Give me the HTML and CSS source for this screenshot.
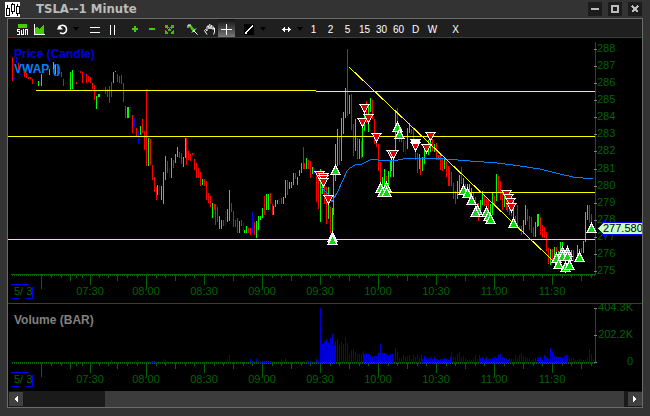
FILE: index.html
```html
<!DOCTYPE html>
<html lang="en">
<head>
  <meta charset="UTF-8">
  <meta name="viewport" content="width=device-width, initial-scale=1.0">
  <title>TSLA--1 Minute</title>
  <link rel="stylesheet" href="styles.css">
</head>
<body>
  <!-- Title bar -->
  <header class="titlebar">
    <svg class="logo" width="15" height="15" viewBox="0 0 15 15" shape-rendering="crispEdges">
      <rect width="15" height="15" fill="#fff"/>
      <path d="M2.5 3V14M7.5 1V12M12.5 2V14" stroke="#000"/>
      <path d="M1.5 6.500H4.500V13.500H1.500ZM6.500 2.500H9.500V9.500H6.500ZM11.500 4.500H14.500V11.500H11.500Z" fill="#fff" stroke="#000"/>
    </svg>
    <h1>TSLA--1 Minute</h1>
    <div class="window-buttons">
      <button aria-label="Minimize"><svg width="8" height="8"><path d="M0 4H8" stroke-width="2"/></svg></button>
      <button aria-label="Maximize"><svg width="8" height="8"><rect x="1" y="1" width="6" height="6" stroke-width="2"/></svg></button>
      <button aria-label="Close"><svg width="8" height="8"><path d="M1 1L7 7M7 1L1 7" stroke-width="2"/></svg></button>
    </div>
  </header>

  <main class="frame">
    <!-- Toolbar -->
    <div class="toolbar">
      <div class="group">
        <button aria-label="Sum"><svg width="11" height="11"><path class="lime" d="M1 0H10V4H1Z"/><path d="M3 5.500H.500V7.500H2.500V10.500H0M4.500 6V10.500H6.500V5M8.500 11V5.500H10.500V11"/></svg></button>
        <button aria-label="Chart type"><svg width="11" height="11"><path class="lime" d="M1 10V4L3 3L5 5L8 2L9 1H10V10Z"/><path d="M.500 0V10.500H11"/></svg></button>
      </div>
      <div class="group">
        <button aria-label="Refresh"><svg width="11" height="11" class="smooth"><path d="M2 3.500C4 0 9.500 1 9.500 5.500C9.500 9.500 5 10.500 3 8.500" stroke-width="1.500"/><path class="white" d="M0 5.500L6 5.500L2 1Z"/></svg></button>
        <button class="drop" aria-label="Refresh options"></button>
      </div>
      <div class="group">
        <button aria-label="Horizontal line"><svg width="11" height="11"><path d="M0 3.500H10M0 8.500H10"/></svg></button>
        <button aria-label="Vertical line"><svg width="11" height="11"><path d="M3.500 1V11M7.500 1V11"/></svg></button>
      </div>
      <div class="group">
        <button aria-label="Zoom in"><svg width="11" height="11"><path class="lime" d="M4 2H6V4H8V6H6V8H4V6H2V4H4Z"/></svg></button>
        <button aria-label="Zoom out"><svg width="11" height="11"><path class="lime" d="M2 4H8V6H2Z"/></svg></button>
        <button aria-label="Fit"><svg width="11" height="11"><path class="green" d="M1.500 4V1.500H4M7 1.500H9.500V4M9.500 6V9.500H7M4 9.500H1.500V6"/><path class="green" d="M2 2L9 9M9 2L2 9" stroke-width="2" stroke-dasharray="3 1"/></svg></button>
      </div>
      <div class="group">
        <button aria-label="Pencil"><svg width="11" height="11" class="smooth"><path class="lime" d="M1 1L4 1L8 6L8 8L6 8Z"/><path d="M1 4V1H4M5 8.500L9 4.500M6.500 6.500L10.500 10.500"/></svg></button>
        <button aria-label="Pan"><svg width="11" height="11" class="smooth"><path d="M3 10.500L.500 6.500L1.500 5.500L3 7V2.500L4 2L5 3V5V1L6 .500L7 1.500V5V2L8 1.500L9 2.500V5.500V4L10.500 4V8L9.500 10.500"/></svg></button>
        <button class="active" aria-label="Crosshair"><svg width="11" height="11"><path d="M5.500 0V11M0 5.500H11"/></svg></button>
      </div>
      <div class="group">
        <button aria-label="Draw line"><svg width="11" height="11"><rect class="black" width="10" height="11"/><path d="M1 9.500L9 1.500"/><path class="white" d="M1 8H3V10H1Z"/></svg></button>
        <button class="drop" aria-label="Line options"></button>
      </div>
      <div class="group spaced">
        <button aria-label="Bar width"><svg width="11" height="11"><path d="M1 5.500H10M3.500 3V8M7.500 3V8M2.500 4V7M8.500 4V7"/></svg></button>
        <button class="drop" aria-label="Width options"></button>
        <button>1</button>
        <button>2</button>
        <button>5</button>
        <button>15</button>
        <button>30</button>
        <button>60</button>
        <button>D</button>
        <button>W</button>
      </div>
      <button>X</button>
    </div>

    <!-- Price and volume panes, filled by chart.js -->
    <svg id="price" class="pane" viewBox="8 38 634 265">
      <text class="name blue" x="14" y="58">Price (Candle)</text>
      <text class="name sky" x="14" y="73">VWAP ()</text>
    </svg>
    <svg id="volume" class="pane" viewBox="8 304 634 87">
      <text class="name gray" x="14" y="324">Volume (BAR)</text>
    </svg>

    <div class="scrollbar">
      <button aria-label="Scroll left"><svg width="4" height="6"><path class="white" d="M4 0V6L0 3Z"/></svg></button>
      <span></span>
      <span class="thumb"></span>
      <span></span>
      <button aria-label="Scroll right"><svg width="4" height="6"><path class="white" d="M0 0V6L4 3Z"/></svg></button>
    </div>
  </main>

  <script src="chart.js"></script>
</body>
</html>
```

FILE: styles.css
```css
* {
  box-sizing: border-box;
}
body {
  margin: 0;
  padding: 0 7px 8px;
  min-height: 100vh;
  background: #333;
  font-family: "Liberation Sans", Arial, sans-serif;
}
button {
  display: flex;
  align-items: center;
  justify-content: center;
  padding: 0;
  border: none;
  background: none;
  color: #fff;
  font: 10px "Liberation Sans", Arial, sans-serif;
}
button svg {
  display: block;
  fill: none;
  stroke: #fff;
  shape-rendering: crispEdges;
}
button .smooth {
  shape-rendering: auto;
}
.lime {
  fill: #4c0;
  stroke: none;
}
.green {
  stroke: #4b0;
}
.white {
  fill: #fff;
  stroke: none;
}
.black {
  fill: #000;
  stroke: none;
}

/* title bar */
.titlebar {
  display: flex;
  align-items: center;
  height: 18px;
  margin-left: -2px;
}
.titlebar h1 {
  flex: 1;
  margin: 0 0 0 16px;
  color: #bbb;
  font: bold 13px/18px "DejaVu Sans Condensed", Tahoma, sans-serif;
}
.window-buttons {
  display: flex;
  gap: 6px;
  padding-right: 1px;
}
.window-buttons button {
  width: 14px;
  height: 14px;
  background: #1c1c1c;
}
.window-buttons svg {
  stroke: #bbb;
}

.frame {
  border: 1px solid #6b6b6b;
  background: #000;
}

/* toolbar */
.toolbar {
  display: flex;
  gap: 6px;
  height: 19px;
  padding-left: 6px;
  background: #1f1f1f;
  border-bottom: 1px solid #006400;
}
.group {
  display: flex;
}
.spaced {
  margin-left: 4px;
}
.toolbar button {
  width: 17px;
  padding-top: 2px;
}
.toolbar .drop {
  width: 10px;
}
.drop::before {
  content: "";
  border: 3px solid transparent;
  border-top: 4px solid #000;
  border-bottom: none;
}
.toolbar .active {
  background: linear-gradient(#111, #777);
}

/* chart panes */
.pane {
  display: block;
  width: 100%;
  shape-rendering: crispEdges;
}
#price {
  box-sizing: content-box;
  border-bottom: 1px solid #006400;
}
.name {
  font-size: 12px;
  font-weight: bold;
}
.blue {
  fill: #00d;
}
.sky {
  fill: #0080ff;
}
.gray {
  fill: #808080;
}
.axis {
  fill: #006400;
}
.label {
  fill: #006400;
  font-size: 11px;
}
.mid {
  text-anchor: middle;
}
.end {
  text-anchor: end;
}
.date {
  fill: #00f;
}
.up {
  fill: #0f0;
}
.down {
  fill: #f00;
}
.flat {
  fill: #00f;
}
.bar {
  fill: #00d;
}
.level {
  fill: #ff0;
}
.trend {
  stroke: #ff0;
}
.vwap {
  fill: none;
  stroke: #0080ff;
}
.buy {
  fill: #00e000;
  stroke: #fff;
}
.sell {
  fill: #e00000;
  stroke: #fff;
}
.tag {
  fill: #c8ffc8;
  stroke: #00f;
}
.tag-text {
  fill: #000;
  font-size: 11px;
}

/* scroll bar */
.scrollbar {
  display: grid;
  grid-template-columns: 14px 82fr 519fr 4px 14px;
  height: 16px;
  padding: 0 0 0 1px;
  background: #1a1a1a;
}
.scrollbar button {
  margin: 1px 0;
  background: #404040;
}
.thumb {
  background: #3c3c3c;
}
```

FILE: chart.js
```js
const NS = 'http://www.w3.org/2000/svg';
const price = document.getElementById('price');
const volume = document.getElementById('volume');

function add(parent, tag, cls, attrs, text) {
  const el = document.createElementNS(NS, tag);
  el.setAttribute('class', cls);
  for (const key in attrs) el.setAttribute(key, attrs[key]);
  if (text) el.textContent = text;
  parent.appendChild(el);
}
function rect(parent, cls, x, y, width, height) {
  add(parent, 'rect', cls, { x, y, width, height });
}

// Candles: colour, x, top, bottom
const candles = `
r12 57 81,b14 78 79,b16 57 63,r18 63 69,b20 74 75,r24 71 77,r26 73 78,r28 77 79,r30 77 79,r32 79 84,b34 89 90,b36 83 84,g38 81 86,g41 74 86,
b43 75 76,b45 75 76,b47 74 75,g49 69 75,g53 62 69,g55 65 74,r57 66 75,r59 70 74,r61 72 77,r63 79 86,b65 83 84,b67 83 84,b69 78 86,g70 72 90,g72 70 89,b74 83 84,r76 82 84,
b78 71 72,r80 71 73,r82 72 83,b84 74 75,r86 74 83,r88 76 82,r90 77 83,r92 83 89,r94 85 100,g96 96 109,g98 94 97,g99 94 97,b101 92 93,b103 89 90,
r105 87 94,r107 89 97,r109 86 103,r111 82 97,g113 72 83,g115 71 72,r117 74 82,r119 76 83,r121 75 84,r123 83 102,r125 106 118,g127 107 118,g128 107 118,
b130 107 108,r132 115 133,b134 118 127,r136 128 136,b138 131 144,g140 126 135,r142 119 133,r144 131 150,r146 89 166,g148 138 166,r150 139 165,r152 165 180,
r154 177 192,r156 187 200,g157 185 195,b159 185 195,g161 186 200,g163 172 204,g165 156 180,r167 161 173,b169 168 178,g171 158 178,r173 160 168,g175 154 163,
g177 147 157,r179 152 158,r181 153 164,g183 157 167,g185 138 158,r186 138 165,r188 151 160,r190 154 161,r192 153 155,r194 159 170,r196 163 178,r198 168 178,
r200 172 186,g202 179 185,r204 179 186,r206 181 200,r208 193 203,r210 196 207,g212 203 218,r214 204 210,r215 204 225,r217 207 222,g219 216 229,g221 220 229,
r223 220 226,b225 211 226,g227 209 222,g229 190 221,r231 203 212,r233 211 227,r235 220 227,r237 218 233,g239 221 233,r241 220 226,b243 222 232,g244 230 233,
g246 226 233,r248 228 233,r250 228 235,b252 212 233,r254 222 235,g256 221 238,g258 216 230,g260 216 220,g262 208 218,r264 196 215,g266 194 210,g268 194 210,
r270 193 204,r272 204 215,g273 206 215,g275 200 207,g277 200 204,b279 199 204,r281 198 204,g283 197 204,g285 180 198,r287 180 195,g289 182 189,g291 182 188,
g293 173 185,r295 173 179,g297 177 185,g299 170 176,g301 163 173,r303 147 169,r304 163 169,g306 158 169,r308 160 169,r310 161 178,g312 167 174,b314 169 174,
r316 171 202,r318 175 209,g320 169 222,g322 175 194,r324 180 204,r326 187 224,g328 187 219,r330 207 233,g332 208 236,g333 170 215,g335 144 181,g337 129 166,
r339 136 165,g341 118 161,g343 112 134,g345 88 118,r347 49 116,g349 95 114,r351 94 130,r353 124 156,g355 119 151,r357 138 159,g359 139 159,r361 141 158,
g362 120 157,g364 110 131,r366 101 123,g368 105 132,g370 98 112,r372 100 119,r374 119 144,r376 133 147,r378 144 171,r380 162 185,g382 177 187,g384 169 185,
r386 176 184,g388 171 187,g390 161 177,g391 157 171,g393 158 177,g395 110 156,r397 108 127,r399 128 142,r401 128 142,r403 140 152,b405 141 154,g407 128 149,
g409 123 133,r411 129 134,r413 127 143,r415 151 160,r417 153 173,g419 154 169,r420 159 175,g422 157 171,g424 148 164,r426 150 153,g428 140 155,g430 139 152,
r432 139 151,g434 144 152,r436 143 160,r438 155 160,r440 153 170,r442 158 171,g444 158 169,r446 161 177,r448 166 186,r449 168 186,r451 172 186,r453 183 199,
r455 191 204,g457 181 199,g459 175 192,r461 167 184,g463 178 190,r465 184 190,g467 184 190,g469 184 192,g471 188 195,r473 192 203,r475 197 208,r477 203 216,
r478 203 221,g480 200 210,g482 191 205,r484 195 206,r486 199 208,r488 200 210,g490 204 214,g492 193 215,r494 196 204,g496 174 201,r498 176 192,r500 181 200,
r502 191 210,g504 193 207,r506 200 210,r507 200 212,r509 205 215,r511 210 216,g513 201 222,r515 216 224,r517 205 226,r519 226 230,r521 226 235,g523 220 234,
g525 205 225,r527 209 221,r529 216 230,r531 217 233,r533 227 237,g535 222 237,g537 214 227,g538 214 226,r540 217 235,r542 225 238,r544 227 238,r546 232 251,
r548 248 264,g550 249 265,r552 249 260,g554 247 260,r556 247 257,g558 251 258,g560 242 253,g562 242 253,r564 249 256,g567 245 254,r569 250 258,g571 250 260,
r573 250 261,g577 245 257,g579 249 253,r581 248 253,g583 241 253,g585 212 242,g587 205 220,r589 205 223,r591 214 225`;
const colours = { r: 'down', g: 'up', b: 'flat' };
candles.trim().split(/,\s*/).forEach((c) => {
  const [x, top, bottom] = c.slice(1).split(' ').map(Number);
  rect(price, colours[c[0]], x, top, 1, bottom - top);
});

// VWAP, support levels and trend line
add(price, 'polyline', 'vwap', {
  points: '321,187 328,194 332,202 338,191 343,180 347,171 350,168 355,165 362,164 372,159 378,160 388,161 398,160 408,158 435,158 445,159 470,161 497,163 513,165 540,169 560,174 573,177 583,178 593,179'
});
rect(price, 'level', 36, 90, 280, 1);
rect(price, 'level', 316, 91, 279, 1);
rect(price, 'level', 8, 136, 587, 1);
rect(price, 'level', 387, 192, 208, 1);
rect(price, 'level', 8, 239, 587, 1);
add(price, 'line', 'trend', { x1: 349, y1: 67, x2: 566, y2: 273 });

// Time axis, one for each pane
const hours = [[90, '07:30'], [146, '08:00'], [204, '08:30'], [262, '09:00'], [320, '09:30'],
  [378, '10:00'], [436, '10:30'], [494, '11:00'], [552, '11:30']];
function timeAxis(pane, y) {
  rect(pane, 'axis', 11, y, 585, 1);
  for (let x = 12; x < 595; x += 2) rect(pane, 'axis', x, y + 1, 1, 1);
  rect(pane, 'axis', 41, y, 1, 15);
  [51, 61, 76, 82, 99, 108, 127, 137].forEach((x) => rect(pane, 'axis', x, y, 1, 4));
  [70, 117].forEach((x) => rect(pane, 'axis', x, y, 1, 7));
  for (let i = 0; i < 47; i++) {
    const x = 146 + Math.round(i * 58 / 6);
    if (i % 6) rect(pane, 'axis', x, y, 1, i % 3 ? 4 : 7);
  }
  hours.forEach(([x, name]) => {
    rect(pane, 'axis', x, y, 1, name.endsWith('00') ? 15 : 11);
    add(pane, 'text', 'label mid', { x, y: y + 21 }, name);
  });
  add(pane, 'text', 'label', { x: 14, y: y + 21 }, '5/ 3');
  rect(pane, 'date', 11, y + 10, 18, 1);
  rect(pane, 'date', 12, y + 24, 8, 1);
  rect(pane, 'date', 26, y + 24, 7, 1);
  rect(pane, 'date', 32, y + 13, 1, 12);
}
timeAxis(price, 274);

// Price axis
rect(price, 'axis', 595, 42, 1, 233);
for (let i = 0; i <= 13; i++) {
  const y = 49 + Math.round(i * 222 / 13);
  rect(price, 'gray', 594, y, 3, 1);
  add(price, 'text', 'label', { x: 597, y: y + 3 }, String(288 - i));
}

// Order markers
const sells = [[319, 175], [323, 177], [323, 179], [323, 182], [328, 199], [364, 108], [362, 122], [368, 118],
  [376, 137], [391, 154], [393, 154], [415, 143], [415, 146], [426, 148], [430, 136], [506, 194], [508, 198], [510, 202], [511, 207]];
const buys = [[335, 170], [332, 237], [332, 240], [397, 127], [399, 134], [380, 188], [386, 187], [382, 192], [386, 192],
  [463, 190], [467, 193], [471, 200], [477, 210], [475, 212], [486, 212], [488, 216], [490, 219], [513, 223],
  [562, 252], [567, 252], [556, 258], [562, 256], [567, 256], [565, 267], [558, 264], [569, 265], [579, 257], [591, 228]];
sells.forEach(([x, y]) => {
  add(price, 'path', 'sell', { d: `M${x - 4} ${y - 3.5}H${x + 5}L${x + 0.5} ${y + 4.5}Z` });
});
buys.forEach(([x, y]) => {
  add(price, 'path', 'buy', { d: `M${x - 4} ${y + 4.5}H${x + 5}L${x + 0.5} ${y - 4.5}Z` });
});
add(price, 'rect', 'white', { x: 411, y: 139, width: 9, height: 5 });

// Last price tag
add(price, 'path', 'tag', { d: 'M644 222.5H604.5V221L597.5 228.5L604.5 236V234.5H644Z' });
add(price, 'text', 'tag-text', { x: 603, y: 232 }, '277.580');

// Volume: one bar a minute, from 09:30
timeAxis(volume, 362);
const bars = [54, 18, 21, 23, 19, 24, 28, 17, 21, 23, 17, 20, 18, 25, 19, 8, 12, 13, 10, 8, 8, 8, 11, 8, 9, 8, 7, 5, 6, 6,
  9, 18, 9, 9, 8, 7, 8, 8, 7, 14, 10, 4, 4, 7, 5, 6, 7, 3, 7, 5, 7, 5, 7, 3, 6, 4, 3, 5, 3, 5,
  3, 2, 3, 3, 4, 3, 2, 5, 10, 5, 5, 8, 10, 5, 6, 4, 2, 3, 2, 4, 7, 3, 7, 4, 5, 3, 5, 3, 3, 4,
  5, 4, 7, 8, 5, 4, 3, 2, 4, 3, 3, 7, 4, 7, 9, 6, 5, 4, 4, 2, 3, 4, 3, 5, 5, 2, 7, 5, 3, 14,
  10, 6, 5, 5, 5, 4, 6, 7, 4, 4, 3, 4, 2, 2, 3, 3, 2, 2, 4, 13, 8, 3, 2, 1];
bars.forEach((h, i) => rect(volume, 'bar', 320 + Math.round(i * 58 / 30), 362 - h, 1, h + 1));

// Thin trading before the open
const early = { 111: 2, 137: 2, 163: 3, 165: 2, 227: 3, 229: 7, 250: 3, 256: 3, 281: 3, 285: 4, 316: 3 };
for (let x = 11; x < 320; x += 2) rect(volume, 'bar', x, 362, 1, 1);
[127, 129, 135, 139, 147, 149, 152, 154, 167, 203, 207, 211, 215, 217, 221, 225, 231, 233, 237, 243, 252, 260, 262,
  264, 266, 268, 270, 273, 279, 283, 287, 291, 295, 297, 301, 303, 308, 310, 318].forEach((x) => rect(volume, 'bar', x, 361, 1, 2));
for (const x in early) rect(volume, 'bar', x, 362 - early[x], 1, early[x]);

rect(volume, 'axis', 595, 308, 1, 55);
[[308, '404.3K'], [335, '202.2K'], [362, '0']].forEach(([y, name]) => {
  rect(volume, 'gray', 594, y, 3, 1);
  add(volume, 'text', 'label end', { x: 633, y: y + 3 }, name);
});
```
